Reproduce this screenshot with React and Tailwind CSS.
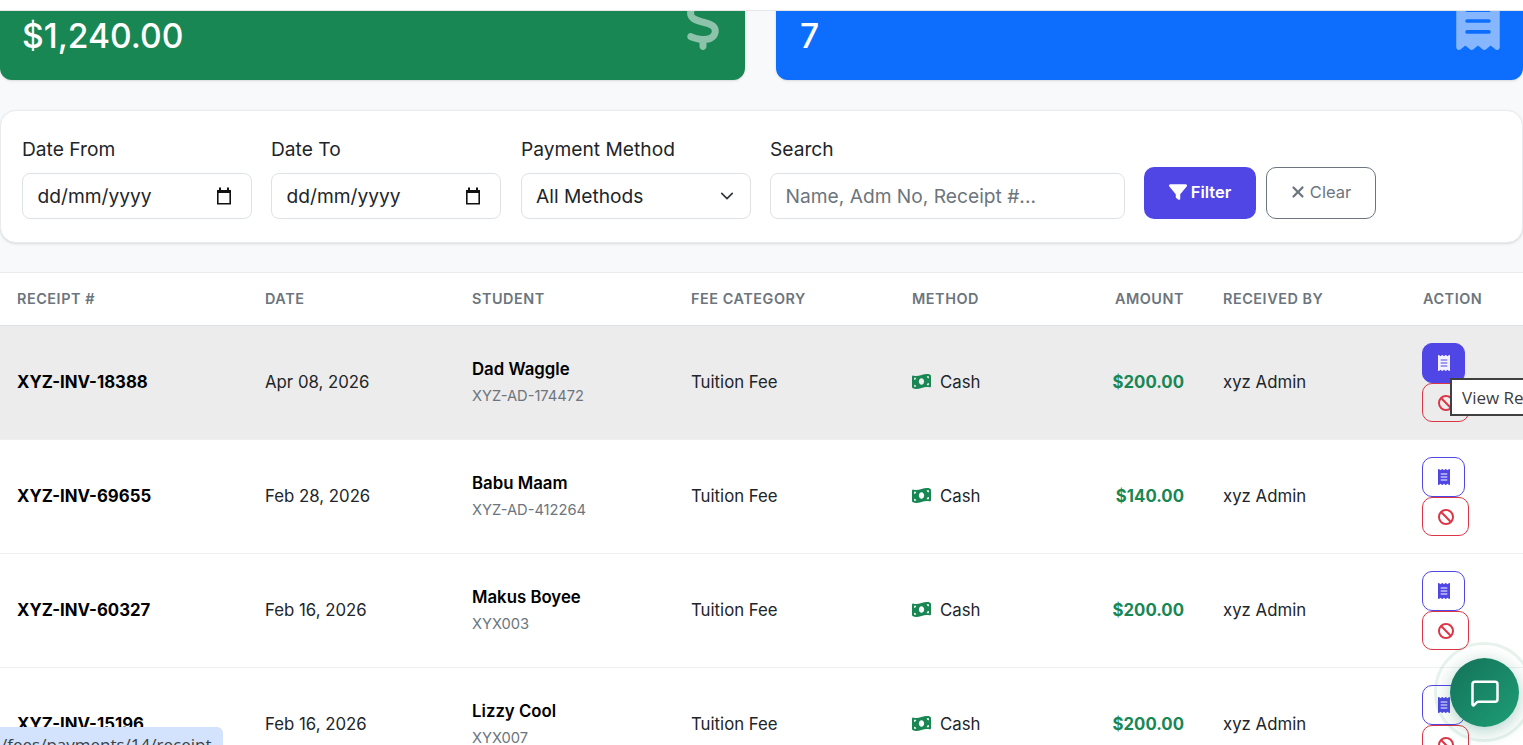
import React from "react";
import { FaDollarSign, FaReceipt, FaFilter, FaXmark, FaBan, FaMoneyBillWave } from "react-icons/fa6";
import { MessageSquare } from "lucide-react";

const rows = [
  { id: "XYZ-INV-18388", date: "Apr 08, 2026", name: "Dad Waggle", adm: "XYZ-AD-174472", amount: "$200.00", active: true },
  { id: "XYZ-INV-69655", date: "Feb 28, 2026", name: "Babu Maam", adm: "XYZ-AD-412264", amount: "$140.00" },
  { id: "XYZ-INV-60327", date: "Feb 16, 2026", name: "Makus Boyee", adm: "XYX003", amount: "$200.00" },
  { id: "XYZ-INV-15196", date: "Feb 16, 2026", name: "Lizzy Cool", adm: "XYX007", amount: "$200.00" },
];

const headers = ["RECEIPT #", "DATE", "STUDENT", "FEE CATEGORY", "METHOD", "AMOUNT", "RECEIVED BY", "ACTION"];

const CalendarIcon = () => (
  <svg width="20" height="20" viewBox="0 0 20 20" className="shrink-0">
    <path d="M5 1.5h2V4h6V1.5h2V4h2v14.5H3V4h2z" fill="#111" />
    <rect x="4.6" y="7" width="10.8" height="10" fill="#fff" />
  </svg>
);

const DateField = ({ label }) => (
  <div className="w-[230px]">
    <div className="mb-[10px] text-[19.2px] leading-[27px] text-[#212529]">{label}</div>
    <div className="flex h-[46px] items-center justify-between rounded-lg border border-[#dee2e6] bg-white pl-[14.5px] pr-[17px] text-[19.2px] text-[#212529]">
      <span>dd/mm/yyyy</span>
      <CalendarIcon />
    </div>
  </div>
);

const App = () => {
  return (
    <div className="relative h-[745px] w-[1523px] overflow-hidden bg-[#f8f9fa] font-['Inter',sans-serif]">
      <div className="relative z-10 h-[11px] border-b border-[#e5e7eb] bg-white" />

      {/* scrolled content */}
      <div className="-mt-[41px]">
        {/* Stat cards */}
        <div className="flex gap-[31px]">
          <div className="relative h-[110px] w-[745px] overflow-hidden rounded-b-xl bg-[#198754] pl-[22px] pt-[49px] text-white shadow-sm">
            <span className="block text-[33.6px] font-medium leading-none">$1,240.00</span>
            <FaDollarSign className="absolute right-[14px] top-[24px] text-[56px] text-white/50" />
          </div>
          <div className="relative h-[110px] w-[747px] overflow-hidden rounded-b-xl bg-[#0d6efd] pl-[24px] pt-[49px] text-white shadow-sm">
            <span className="block text-[33.6px] font-medium leading-none">7</span>
            <FaReceipt className="absolute right-[16px] top-[22px] text-[58px] text-white/50" />
          </div>
        </div>

        {/* Filters */}
        <div className="mt-[30px] flex h-[133px] items-start gap-[19px] rounded-2xl border border-[#e9ecef] bg-white pl-[21px] pt-[25px] shadow-sm">
          <DateField label="Date From" />
          <DateField label="Date To" />
          <div className="ml-px w-[230px]">
            <div className="mb-[10px] text-[19.2px] leading-[27px] text-[#212529]">Payment Method</div>
            <div className="flex h-[46px] items-center justify-between rounded-lg border border-[#dee2e6] bg-white pl-[14px] pr-[16px] text-[19.2px] text-[#212529]">
              <span>All Methods</span>
              <svg width="14" height="14" viewBox="0 0 16 16" fill="none" stroke="#343a40" strokeWidth="2" strokeLinecap="round" strokeLinejoin="round">
                <path d="M2 5l6 6 6-6" />
              </svg>
            </div>
          </div>
          <div className="w-[355px]">
            <div className="mb-[10px] text-[19.2px] leading-[27px] text-[#212529]">Search</div>
            <div className="flex h-[46px] items-center rounded-lg border border-[#dee2e6] bg-white pl-[14.5px] text-[19.2px] text-[#6c757d]">
              Name, Adm No, Receipt #...
            </div>
          </div>
          <div className="mt-[31px] flex gap-[10px]">
            <button className="flex h-[52px] w-[112px] items-center justify-center gap-[4px] rounded-[10px] bg-[#4f46e5] pb-[2px] text-[16.5px] font-semibold text-white">
              <FaFilter className="text-[18px]" /> Filter
            </button>
            <button className="flex h-[52px] w-[110px] items-center justify-center gap-[3px] rounded-[10px] border border-[#6c757d] bg-white pb-[2px] pr-[2px] text-[16.5px] text-[#6c757d]">
              <FaXmark className="text-[18px]" /> Clear
            </button>
          </div>
        </div>

        {/* Table */}
        <table className="mt-[29px] w-[1523px] table-fixed border-t border-[#e9ecef] bg-white text-[16.8px] text-[#212529]">
          <colgroup>
            <col className="w-[248px]" />
            <col className="w-[207px]" />
            <col className="w-[219px]" />
            <col className="w-[221px]" />
            <col className="w-[155px]" />
            <col className="w-[156px]" />
            <col className="w-[200px]" />
            <col />
          </colgroup>
          <thead>
            <tr className="h-[53px] border-b border-[#dee2e6]">
              {headers.map((h) => (
                <th
                  key={h}
                  className={`pl-[17px] text-[14.4px] font-semibold tracking-[0.55px] text-[#6c757d] ${h === "AMOUNT" ? "pr-[22px] text-right" : "text-left"}`}
                >
                  {h}
                </th>
              ))}
            </tr>
          </thead>
          <tbody>
            {rows.map((r) => (
              <tr key={r.id} className={`h-[114px] border-b border-[#eef0f2] ${r.active ? "bg-[#ececec]" : ""}`}>
                <td className="pl-[17px] font-bold text-black">{r.id}</td>
                <td className="pl-[17px]">{r.date}</td>
                <td className="pb-[2px] pl-[17px]">
                  <div className="font-semibold leading-[25px] text-black">{r.name}</div>
                  <div className="mt-[3px] text-[14.7px] leading-[22px] text-[#6c757d]">{r.adm}</div>
                </td>
                <td className="pl-[17px]">Tuition Fee</td>
                <td className="pl-[17px]">
                  <span className="flex items-center gap-[9px]">
                    <FaMoneyBillWave className="-mt-[2px] text-[19px] text-[#198754]" /> Cash
                  </span>
                </td>
                <td className="pr-[22px] text-right font-bold text-[#198754]">{r.amount}</td>
                <td className="pl-[17px]">xyz Admin</td>
                <td className="pl-[16px]">
                  <div className="flex flex-col items-start">
                    <button className={`flex h-[40px] w-[43px] items-center justify-center rounded-[10px] border border-[#4f46e5] ${r.active ? "bg-[#4f46e5] text-[#f3f2ff]" : "text-[#4f46e5]"}`}>
                      <FaReceipt className="text-[16px]" />
                    </button>
                    <button className="flex h-[39px] w-[47px] items-center justify-center rounded-[10px] border border-[#dc3545] text-[#dc3545]">
                      <FaBan className="text-[16px]" />
                    </button>
                  </div>
                </td>
              </tr>
            ))}
          </tbody>
        </table>
      </div>

      {/* native title tooltip */}
      <div className="absolute left-[1450px] top-[378px] h-[38px] w-[90px] border-2 border-[#404040] bg-white pl-[10px] text-[17px] leading-[36px] whitespace-nowrap text-[#3c3c3c] font-['Open_Sans',sans-serif]">
        View Receipt
      </div>

      {/* chat widget */}
      <div className="absolute left-[1434px] top-[642px] h-[100px] w-[100px] rounded-full border-[3px] border-[#198754]/10" />
      <button className="absolute left-[1450px] top-[658px] flex h-[69px] w-[69px] items-center justify-center rounded-full bg-gradient-to-br from-[#14725a] to-[#1e9e75] text-white shadow-[0_4px_18px_rgba(21,122,94,0.35)]">
        <MessageSquare size={30} strokeWidth={2} />
      </button>

      {/* browser status bubble */}
      <div className="absolute bottom-0 left-0 h-[18px] w-[223px] overflow-hidden rounded-tr-md bg-[#d3e3fd] pl-[1px] pt-[6px] text-[17px] leading-[24px] whitespace-nowrap text-[#3c4043] font-['Open_Sans',sans-serif]">
        /fees/payments/14/receipt
      </div>
    </div>
  );
};

export default App;
